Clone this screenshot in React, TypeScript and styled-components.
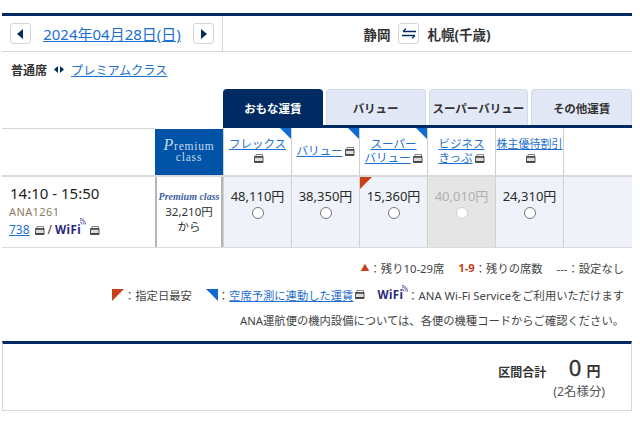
import * as React from 'react';
import styled, { createGlobalStyle } from 'styled-components';

const GlobalStyle = createGlobalStyle`
	html, body {
		margin: 0;
		padding: 0;
		background: #fff;
		color: #333;
		font-family: "Noto Sans", "Noto Sans CJK JP", sans-serif;
		font-size: 12px;
	}
`;

const navy = '#002a62';
const linkBlue = '#1e6fd0';

const Page = styled.div`
	width: 630px;
	margin: 13px 0 0 2px;
`;

const RouteBar = styled.div`
	display: flex;
	height: 35px;
	border-top: 3px solid ${navy};
	border-bottom: 1px solid #d6d6d6;
`;

const DateCell = styled.div`
	width: 221px;
	display: flex;
	align-items: center;
	padding-left: 8px;
	box-sizing: border-box;
	border-right: 1px solid #d6d6d6;
`;

const DateLink = styled.a`
	width: 162px;
	text-align: center;
	font-size: 15px;
	color: ${linkBlue};
	text-decoration: underline;
	white-space: nowrap;
`;

const SquareButton = styled.span`
	width: 21px;
	height: 21px;
	box-sizing: border-box;
	border: 1px solid #d4d4d4;
	border-radius: 3px;
	display: inline-flex;
	align-items: center;
	justify-content: center;
	background: #fff;
`;

const RouteCell = styled.div`
	flex: 1;
	display: flex;
	align-items: center;
	justify-content: center;
	gap: 8px;
	font-size: 13.5px;
	font-weight: 700;
	padding-right: 1px;
`;

const SeatRow = styled.div`
	height: 37px;
	display: flex;
	align-items: center;
	padding: 0 0 2px 9px;
	gap: 7px;
	font-size: 12px;
	font-weight: 700;
	box-sizing: border-box;
`;

const SeatLink = styled.a`
	font-size: 12.2px;
	font-weight: 400;
	color: ${linkBlue};
	text-decoration: underline;
`;

const TabBar = styled.div`
	display: flex;
	height: 36px;
	margin-left: 221px;
	gap: 3px;
	border-bottom: 3px solid ${navy};
`;

const Tab = styled.div<{ $active?: boolean; $width: number }>`
	width: ${p => p.$width}px;
	box-sizing: border-box;
	display: flex;
	align-items: center;
	justify-content: center;
	padding-top: 1px;
	font-size: 11.5px;
	font-weight: 700;
	border-radius: 4px 4px 0 0;
	background: ${p => (p.$active ? navy : '#e2e8f6')};
	color: ${p => (p.$active ? '#fff' : '#333')};
	border: ${p => (p.$active ? 'none' : '1px solid #d3d9e8')};
	border-bottom: none;
	white-space: nowrap;
`;

const Grid = styled.div`
	display: grid;
	grid-template-columns: 153px 68px repeat(5, 68px) 69px;
	grid-template-rows: 49px 70px;
	border-bottom: 1px solid #dcdcdc;
`;

const LeftBlank = styled.div`
	border-bottom: 2px solid #d9d9d9;
	border-top: 1px solid #d6d6d6;
`;

const PremiumHead = styled.div`
	background: #0054a7;
	color: #c6d8ee;
	border-top: 1px solid #fff;
	border-bottom: 2px solid #d9d9d9;
	display: flex;
	flex-direction: column;
	align-items: center;
	padding-bottom: 2px;
	justify-content: center;
	font-family: "Liberation Serif", serif;
	font-size: 11.5px;
	line-height: 11px;
	letter-spacing: 0.8px;
`;

const ScriptP = styled.span`
	font-style: italic;
	font-size: 16px;
`;

const FareHead = styled.div<{ $corner?: boolean; $single?: boolean }>`
	position: relative;
	box-sizing: border-box;
	border-left: 1px solid #d0d0d0;
	border-bottom: 2px solid #d9d9d9;
	padding-top: ${p => (p.$single ? 16 : 9)}px;
	text-align: center;
	line-height: 14px;
	font-size: 11.5px;
	&::after {
		content: '';
		display: ${p => (p.$corner ? 'block' : 'none')};
		position: absolute;
		top: 0;
		right: 0;
		border-style: solid;
		border-width: 0 11px 11px 0;
		border-color: transparent #0f6ad0 transparent transparent;
	}
`;

const FareLink = styled.a<{ $size?: number }>`
	color: ${linkBlue};
	text-decoration: underline;
	font-size: ${p => p.$size ?? 11.5}px;
	white-space: nowrap;
`;

const Flight = styled.div`
	padding: 5px 0 0 7px;
`;

const Times = styled.div`
	font-size: 15px;
	line-height: 22px;
	color: #222;
	margin-left: 1px;
`;

const FlightNo = styled.div`
	font-size: 11px;
	line-height: 16px;
	color: #8a7a63;
	letter-spacing: 0.4px;
`;

const Equip = styled.div`
	display: flex;
	align-items: center;
	gap: 3px;
	font-size: 12px;
	line-height: 20px;
	a {
		color: ${linkBlue};
		text-decoration: underline;
	}
`;

const PremiumCell = styled.div`
	border-left: 2px solid #b5b5b5;
	border-right: 2px solid #b5b5b5;
	text-align: center;
	padding-top: 13px;
	font-size: 11.5px;
	line-height: 15px;
`;

const PremiumMini = styled.div`
	font-family: "Liberation Serif", serif;
	font-size: 10px;
	line-height: 14px;
	color: #3d5f9e;
	font-weight: 700;
	font-style: italic;
	white-space: nowrap;
`;

const Fare = styled.div<{ $disabled?: boolean; $low?: boolean }>`
	position: relative;
	box-sizing: border-box;
	border-left: 1px solid #d0d0d0;
	background: ${p => (p.$disabled ? '#e5e5e5' : '#eff3f9')};
	color: ${p => (p.$disabled ? '#b0b0b0' : '#2a2a2a')};
	display: flex;
	flex-direction: column;
	align-items: center;
	padding-top: 10px;
	font-size: 13px;
	line-height: 18px;
	&::before {
		content: '';
		display: ${p => (p.$low ? 'block' : 'none')};
		position: absolute;
		top: 0;
		left: 0;
		border-style: solid;
		border-width: 12px 12px 0 0;
		border-color: #c8401a transparent transparent transparent;
	}
`;

const Radio = styled.span<{ $disabled?: boolean }>`
	width: 12px;
	height: 12px;
	box-sizing: border-box;
	border-radius: 50%;
	background: #fff;
	border: 1px solid ${p => (p.$disabled ? '#cfcfcf' : '#777')};
	margin-top: 2px;
`;

const Notes = styled.div`
	display: flex;
	flex-direction: column;
	align-items: flex-end;
	padding: 6px 8px 0 0;
	font-size: 11.3px;
	color: #444;
`;

const NoteLine = styled.div<{ $height: number }>`
	display: flex;
	align-items: center;
	height: ${p => p.$height}px;
	white-space: nowrap;
`;

const Sep = styled.span<{ $w: number }>`
	display: inline-block;
	width: ${p => p.$w}px;
`;

const RedText = styled.span<{ $size?: number }>`
	color: #c8401a;
	font-weight: 700;
	font-size: ${p => p.$size ?? 11.3}px;
`;

const WifiMark = styled.span`
	position: relative;
	display: inline-block;
	padding-right: 4px;
	font-size: 11.5px;
	font-weight: 700;
	color: #28287e;
	letter-spacing: 0.4px;
	svg {
		position: absolute;
		right: -1px;
		top: -2px;
	}
`;

const TotalBox = styled.div`
	margin-top: 9px;
	border-top: 3px solid ${navy};
	border-left: 1px solid #d6d6d6;
	border-right: 1px solid #d6d6d6;
	border-bottom: 1px solid #d6d6d6;
	height: 70px;
	box-sizing: border-box;
	display: flex;
	justify-content: flex-end;
	padding: 10px 26px 0 0;
	color: #333;
`;

const TotalLabel = styled.span`
	font-size: 12px;
	font-weight: 700;
	margin: 9px 7px 0 0;
`;

const TotalAmount = styled.div`
	display: flex;
	flex-direction: column;
	align-items: center;
`;

const AmountLine = styled.div`
	font-size: 14px;
	font-weight: 700;
	line-height: 26px;
	margin-left: 11px;
	b {
		font-size: 22px;
		font-weight: 400;
		-webkit-text-stroke: 0.4px #333;
		margin-right: 5px;
	}
`;

const Persons = styled.span`
	font-size: 12.4px;
	line-height: 15px;
	color: #555;
`;

const Arrow = ({ dir }: { dir: 'left' | 'right' }) => (
	<svg width="7" height="10" viewBox="0 0 7 10">
		<path d={dir === 'left' ? 'M6 0v10L0 5z' : 'M1 0v10l6-5z'} fill={navy} />
	</svg>
);

const Swap = () => (
	<svg width="14" height="11" viewBox="0 0 14 11" fill="none" stroke={navy} strokeWidth="1.3">
		<path d="M14 3.500H1M4 .6 1 3.500M0 7.500h13M10 10.400l3-2.900" />
	</svg>
);

const BothWays = () => (
	<svg width="10" height="7" viewBox="0 0 10 7">
		<path d="M4 0v7L0 3.500zM6 0v7l4-3.500z" fill={navy} />
	</svg>
);

// new-window marker used next to the links
const WindowIcon = () => (
	<svg width="10" height="9" viewBox="0 0 10 9" style={{ verticalAlign: '-1px', marginLeft: 2 }}>
		<path d="M2 .5h6.500v2H2z" fill="#fff" stroke="#666" strokeWidth="0.8" />
		<path d="M.5 2.500h8.500v6H.5z" fill="#ddd" stroke="#444" strokeWidth="0.9" />
		<path d="M.5 2.500h8.500v1.200H.5zM.5 7h8.500v1.500H.5z" fill="#444" />
	</svg>
);

const Wifi = () => (
	<WifiMark>
		WiFi
		<svg width="7" height="8" viewBox="0 0 7 8" fill="none" stroke="#5a55b0" strokeWidth="0.9">
			<path d="M1 4a2.500 2.500 0 0 1 2 2.500M1 2a4.500 4.500 0 0 1 4 4.500M1 .4a6 6 0 0 1 5.500 6" />
		</svg>
	</WifiMark>
);

const fares = [
	{ price: '48,110円' },
	{ price: '38,350円' },
	{ price: '15,360円', low: true },
	{ price: '40,010円', disabled: true },
	{ price: '24,310円' },
];

export default function App() {
	return (
		<Page>
			<GlobalStyle />
			<RouteBar>
				<DateCell>
					<SquareButton><Arrow dir="left" /></SquareButton>
					<DateLink>2024年04月28日(日)</DateLink>
					<SquareButton><Arrow dir="right" /></SquareButton>
				</DateCell>
				<RouteCell>
					<span>静岡</span>
					<SquareButton><Swap /></SquareButton>
					<span>札幌(千歳)</span>
				</RouteCell>
			</RouteBar>
			<SeatRow>
				<span>普通席</span>
				<BothWays />
				<SeatLink>プレミアムクラス</SeatLink>
			</SeatRow>
			<TabBar>
				<Tab $active $width={100}>おもな運賃</Tab>
				<Tab $width={100}>バリュー</Tab>
				<Tab $width={100}>スーパーバリュー</Tab>
				<Tab $width={101}>その他運賃</Tab>
			</TabBar>
			<Grid>
				<LeftBlank />
				<PremiumHead>
					<span><ScriptP>P</ScriptP>remium</span>
					<span>class</span>
				</PremiumHead>
				<FareHead $corner>
					<FareLink>フレックス</FareLink>
					<br />
					<WindowIcon />
				</FareHead>
				<FareHead $corner $single>
					<FareLink>バリュー</FareLink>
					<WindowIcon />
				</FareHead>
				<FareHead $corner>
					<FareLink>スーパー</FareLink>
					<br />
					<FareLink>バリュー</FareLink>
					<WindowIcon />
				</FareHead>
				<FareHead>
					<FareLink>ビジネス</FareLink>
					<br />
					<FareLink>きっぷ</FareLink>
					<WindowIcon />
				</FareHead>
				<FareHead>
					<FareLink $size={11}>株主優待割引</FareLink>
					<br />
					<WindowIcon />
				</FareHead>
				<FareHead />

				<Flight>
					<Times>14:10 - 15:50</Times>
					<FlightNo>ANA1261</FlightNo>
					<Equip>
						<a>738</a>
						<WindowIcon />
						<span>/</span>
						<Wifi />
						<WindowIcon />
					</Equip>
				</Flight>
				<PremiumCell>
					<PremiumMini>Premium class</PremiumMini>
					<div>32,210円</div>
					<div>から</div>
				</PremiumCell>
				{fares.map(f => (
					<Fare key={f.price} $disabled={f.disabled} $low={f.low}>
						{f.price}
						<Radio $disabled={f.disabled} />
					</Fare>
				))}
				<Fare />
			</Grid>
			<Notes>
				<NoteLine $height={27}>
					<RedText $size={9}>▲</RedText>：残り10-29席<Sep $w={14} />
					<RedText>1-9</RedText>：残りの席数<Sep $w={14} />---：設定なし
				</NoteLine>
				<NoteLine $height={27}>
					<svg width="12" height="12" viewBox="0 0 12 12"><path d="M0 0h12L0 12z" fill="#c8401a" /></svg>
					：指定日最安<Sep $w={14} />
					<svg width="12" height="12" viewBox="0 0 12 12"><path d="M0 0h12v12z" fill="#0f6ad0" /></svg>
					：<FareLink $size={11.3}>空席予測に連動した運賃</FareLink><WindowIcon /><Sep $w={12} />
					<Wifi />：ANA Wi-Fi Serviceをご利用いただけます
				</NoteLine>
				<NoteLine $height={24}>ANA運航便の機内設備については、各便の機種コードからご確認ください。</NoteLine>
			</Notes>
			<TotalBox>
				<TotalLabel>区間合計</TotalLabel>
				<TotalAmount>
					<AmountLine><b>0</b>円</AmountLine>
					<Persons>(2名様分)</Persons>
				</TotalAmount>
			</TotalBox>
		</Page>
	);
}
